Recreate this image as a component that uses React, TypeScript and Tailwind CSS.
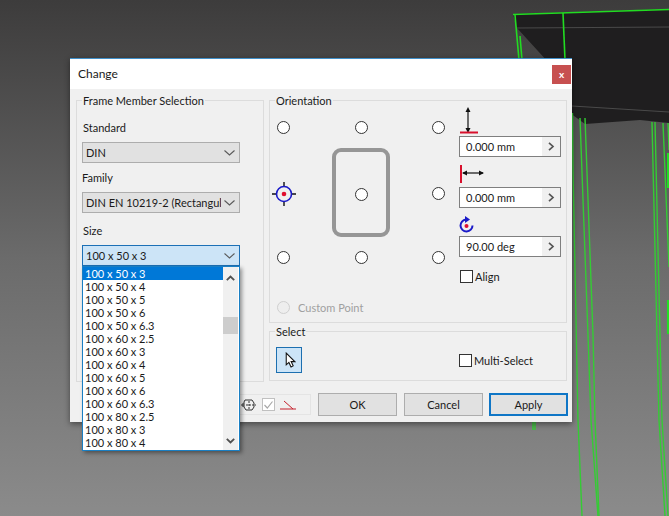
import type { ReactNode } from "react";

const sizes = [
  "100 x 50 x 3",
  "100 x 50 x 4",
  "100 x 50 x 5",
  "100 x 50 x 6",
  "100 x 50 x 6.3",
  "100 x 60 x 2.5",
  "100 x 60 x 3",
  "100 x 60 x 4",
  "100 x 60 x 5",
  "100 x 60 x 6",
  "100 x 60 x 6.3",
  "100 x 80 x 2.5",
  "100 x 80 x 3",
  "100 x 80 x 4",
];

const Chevron = () => (
  <svg width="11" height="6" viewBox="0 0 11 6" fill="none" stroke="#5a5a5a" strokeWidth="1.1">
    <path d="M0.5 0.5 L5.5 5 L10.5 0.5" />
  </svg>
);

const ScrollArrow = () => (
  <svg width="9" height="6" viewBox="0 0 9 6" fill="none" stroke="#505050" strokeWidth="1.8">
    <path d="M0.8 0.8 L4.5 4.5 L8.2 0.8" />
  </svg>
);

const Radio = ({ disabled = false }: { disabled?: boolean }) => (
  <span
    className={`block h-[13px] w-[13px] shrink-0 rounded-full border ${
      disabled ? "border-[#cfcfcf] bg-[#eeeeee]" : "border-[#333333] bg-white"
    }`}
  />
);

const Group = ({ label, className, children }: { label: string; className: string; children: ReactNode }) => (
  <div className={`relative border border-[#dcdcdc] ${className}`}>
    <span className="absolute -top-[7px] left-[5px] bg-[#f0f0f0] px-px leading-[14px]">{label}</span>
    {children}
  </div>
);

const Select = ({ value, active = false }: { value: string; active?: boolean }) => (
  <div
    className={`flex h-[21px] w-[158px] items-center justify-between border pl-[3px] pr-[3px] ${
      active ? "border-[#1c70b6] bg-[#cce4f7]" : "border-[#adadad] bg-[#e1e1e1]"
    }`}
  >
    <span className="w-[135px] overflow-hidden whitespace-nowrap">{value}</span>
    <span className="mr-[1px]">
      <Chevron />
    </span>
  </div>
);

const NumberInput = ({ value }: { value: string }) => (
  <div className="flex h-[21px] w-[102px] items-center justify-between border border-[#7f7f7f] bg-white pl-[6px]">
    <span className="pb-px">{value}</span>
    <span className="flex h-[19px] w-[18px] items-center justify-center bg-[#f0f0f0]">
      <svg width="7" height="9" viewBox="0 0 7 9" fill="none" stroke="#555555" strokeWidth="1.7">
        <path d="M1 0.8 L5 4.5 L1 8.2" />
      </svg>
    </span>
  </div>
);

const DialogButton = ({ label, primary = false }: { label: string; primary?: boolean }) => (
  <div
    className={`flex h-[23px] w-[79px] items-center justify-center bg-[#e1e1e1] ${
      primary ? "border-2 border-[#0f76c6]" : "border border-[#adadad]"
    }`}
  >
    {label}
  </div>
);

const Backdrop = () => (
  <svg className="absolute left-0 top-0" width="669" height="516" viewBox="0 0 669 516" fill="none">
    <path d="M513 14 L669 9 L669 123 L640 120 L585 124 L570 113 L548 62 L517 28 Z" fill="#1f1e1f" />
    <path d="M517 28 L669 27" stroke="#4a4a4a" />
    <path d="M572 106 L669 112" stroke="#4a4a4a" />
    <g stroke="#22dc22" strokeWidth="1.6">
      <path d="M513 14.5 L669 9.5" />
      <path d="M515 15 L519 60" />
      <path d="M520 36 L522 60" />
      <path d="M563 13 L565 60" />
    </g>
    <g stroke="#34cc34" strokeWidth="1.4">
      <path d="M572.5 113 L573 170 L578 420 L582 516" />
      <path d="M580 118 L588 335 L591 420 L598 516" />
      <path d="M585 118 L593 335 L595 420 L599 516" />
      <path d="M652 122 L659 420 L665 516" />
      <path d="M655 122 L662 420 L668 516" />
      <path d="M663 123 L669 267" />
      <path d="M668 123 L669 150" />
      <path d="M533 422 L533 430" />
      <path d="M535 422 L535 430" />
    </g>
    <path d="M668 153 V188 M668 300 V334" stroke="#22e022" strokeWidth="2" />
  </svg>
);

export default function App() {
  return (
    <div className="relative h-[516px] w-[669px] overflow-hidden bg-gradient-to-b from-[#3d3c3c] via-[#6b6b6b] to-[#8b8b8b] font-['Lato',sans-serif] text-[11px] leading-[13px] text-[#1a1a1a]">
      <Backdrop />

      <div className="absolute left-[70px] top-[58px] flex h-[364px] w-[502px] flex-col border-t border-[#3f8fc9] bg-[#f0f0f0] shadow-[0_2px_6px_rgba(0,0,0,0.45)]">
        {/* Title bar */}
        <div className="flex h-[30px] shrink-0 items-center justify-between bg-white pb-[2px] pl-[8px] pr-px">
          <span className="text-[12px]">Change</span>
          <span className="mt-[2px] flex h-[19px] w-[19px] items-center justify-center bg-[#c75050] text-[10px] font-bold text-white">
            x
          </span>
        </div>

        <div className="flex gap-[5px] pl-[6px] pt-[11px]">
          {/* Frame member selection */}
          <Group label="Frame Member Selection" className="h-[282px] w-[188px] shrink-0 px-[5px]">
            <div className="ml-[1px] mt-[20px] leading-[13px]">Standard</div>
            <div className="mt-[8px]">
              <Select value="DIN" />
            </div>
            <div className="mt-[8px]">Family</div>
            <div className="mt-[8px]">
              <Select value="DIN EN 10219-2 (Rectangular" />
            </div>
            <div className="ml-[1px] mt-[11px]">Size</div>
            <div className="relative mt-[8px]">
              <Select value="100 x 50 x 3" active />
              <div className="absolute left-0 top-full z-10 flex h-[185px] w-[158px] border border-[#1a7fc3] bg-white shadow-[2px_2px_4px_rgba(0,0,0,0.4)]">
                <ul className="w-[140px]">
                  {sizes.map((size, i) => (
                    <li
                      key={size}
                      className={`h-[13px] pl-[2px] leading-[13px] ${i === 0 ? "bg-[#0078d7] text-white" : ""}`}
                    >
                      {size}
                    </li>
                  ))}
                </ul>
                <div className="flex h-[183px] w-[15px] flex-col items-center bg-[#f0f0f0]">
                  <div className="mt-[8px] flex rotate-180">
                    <ScrollArrow />
                  </div>
                  <div className="mt-[36px] h-[17px] w-[15px] bg-[#cdcdcd]" />
                  <div className="mb-[6px] mt-auto flex">
                    <ScrollArrow />
                  </div>
                </div>
              </div>
            </div>
          </Group>

          <div className="flex w-[298px] shrink-0 flex-col gap-[8px]">
            {/* Orientation */}
            <Group label="Orientation" className="h-[223px]">
              <div className="flex pl-[7px]">
                <div className="w-[168px] pt-[20px]">
                  <div className="flex justify-between">
                    <Radio />
                    <Radio />
                    <Radio />
                  </div>
                  <div className="mt-[14px] flex h-[91px] items-center justify-between">
                    <svg className="-ml-[5px] -mr-[6px] shrink-0" width="24" height="24" viewBox="0 0 24 24" fill="none">
                      <path d="M12 0 V24 M0 12 H24" stroke="#111111" strokeWidth="1.4" />
                      <circle cx="12" cy="12" r="7.5" fill="#f0f0f0" stroke="#1a1ac8" strokeWidth="1.6" />
                      <circle cx="12" cy="12" r="2.3" fill="#e01030" />
                    </svg>
                    <div className="flex h-[89px] w-[58px] items-center justify-center self-start rounded-[9px] border-[4px] border-[#969696] pt-[3px]">
                      <Radio />
                    </div>
                    <Radio />
                  </div>
                  <div className="mt-[12px] flex justify-between">
                    <Radio />
                    <Radio />
                    <Radio />
                  </div>
                  <div className="mt-[36px] flex items-center gap-[8px] text-[#a0a0a0]">
                    <Radio disabled />
                    <span className="pt-px">Custom Point</span>
                  </div>
                </div>

                <div className="ml-[14px] w-[102px] pt-[6px]">
                  <svg className="block" width="20" height="29" viewBox="0 0 20 29" fill="none">
                    <path d="M9 2 V24" stroke="#111111" strokeWidth="1.2" />
                    <path d="M9 0 L6.5 5 H11.5 Z M9 26 L6.5 21 H11.5 Z" fill="#111111" />
                    <path d="M1 25.5 H19" stroke="#d8102c" strokeWidth="2" />
                  </svg>
                  <NumberInput value="0.000 mm" />
                  <svg className="mt-[7px] block" width="26" height="23" viewBox="0 0 26 23" fill="none">
                    <path d="M2 1 V19" stroke="#d8102c" strokeWidth="2" />
                    <path d="M4 9 H24" stroke="#111111" strokeWidth="1.2" />
                    <path d="M3 9 L8 6.5 V11.5 Z M25 9 L20 6.5 V11.5 Z" fill="#111111" />
                  </svg>
                  <NumberInput value="0.000 mm" />
                  <svg className="mt-[8px] block" width="16" height="20" viewBox="0 0 16 20" fill="none">
                    <path d="M7 3.5 A6 6 0 1 0 13.5 9.5" stroke="#1a1ac8" strokeWidth="2" />
                    <path d="M6 0 L11 3.5 L6 7 Z" fill="#1a1ac8" />
                    <circle cx="7.5" cy="10" r="2" fill="#e01030" />
                  </svg>
                  <NumberInput value="90.00 deg" />
                  <div className="ml-[1px] mt-[13px] flex items-center gap-[2px]">
                    <span className="h-[13px] w-[13px] border border-[#333333] bg-white" />
                    <span>Align</span>
                  </div>
                </div>
              </div>
            </Group>

            {/* Select */}
            <Group label="Select" className="flex h-[50px] items-start">
              <div className="ml-[6px] mt-[15px] flex h-[26px] w-[26px] items-center border border-[#1c6fb0] bg-[#cce4f7] pl-[8px]">
                <svg width="11" height="16" viewBox="0 0 10 15" fill="#ffffff" stroke="#111111" strokeWidth="1">
                  <path d="M1 1 V12 L3.5 9.8 L5.5 14 L7.5 13 L5.6 9 L9 9 Z" />
                </svg>
              </div>
              <div className="ml-[157px] mt-[22px] flex items-center gap-[2px]">
                <span className="h-[13px] w-[13px] border border-[#333333] bg-white" />
                <span>Multi-Select</span>
              </div>
            </Group>
          </div>
        </div>

        {/* Footer */}
        <div className="mt-[11px] flex items-center justify-end gap-[7px] pr-[4px]">
          <div className="flex h-[21px] w-[72px] items-center gap-[5px] border border-[#e4e4e4] pl-[1px]">
            <svg width="16" height="14" viewBox="0 0 16 14" fill="none" stroke="#333333" strokeWidth="1">
              <path d="M4 2 H11 L13 5 V9 L11 12 H5 L3 9 V8 H1 V6 H3 V4 Z" />
              <path d="M2 7 H15" strokeDasharray="2 1" />
              <path d="M8 3 V11" strokeDasharray="2 1" />
            </svg>
            <span className="flex h-[13px] w-[13px] items-center justify-center border border-[#c0c0c0] bg-white">
              <svg width="9" height="8" viewBox="0 0 9 8" fill="none" stroke="#a8a8a8" strokeWidth="1.2">
                <path d="M0.5 4 L3.3 7 L8.5 0.5" />
              </svg>
            </span>
            <svg width="16" height="10" viewBox="0 0 16 10" fill="none" stroke="#c4202c" strokeWidth="1">
              <path d="M0 9 H16 M4 1 L13 9" />
            </svg>
          </div>
          <DialogButton label="OK" />
          <div className="-ml-[1px] flex gap-[6px] pl-[1px]">
            <DialogButton label="Cancel" />
            <DialogButton label="Apply" primary />
          </div>
        </div>
      </div>
    </div>
  );
}
